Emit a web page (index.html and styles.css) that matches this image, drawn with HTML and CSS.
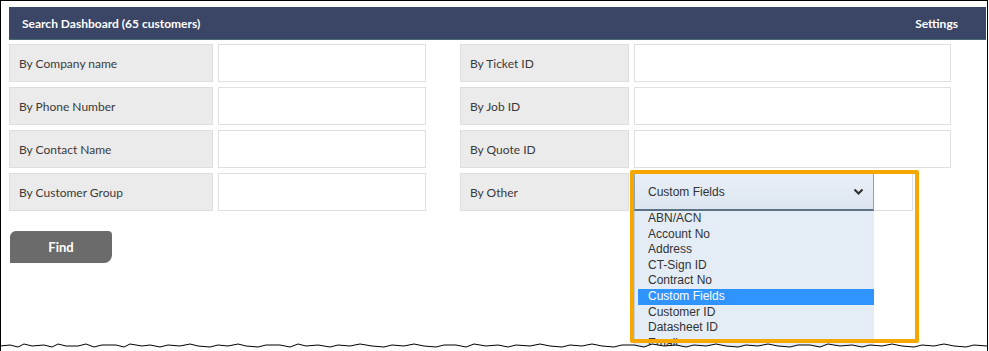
FILE: index.html
```html
<!DOCTYPE html>
<html lang="en">
<head>
    <meta charset="UTF-8">
    <meta name="viewport" content="width=device-width, initial-scale=1.0">
    <title>Search Dashboard</title>
    <link rel="stylesheet" href="styles.css">
</head>
<body>
    <div class="frame">
        <div class="panel">
            <div class="panel-head">
                <span>Search Dashboard (65 customers)</span>
                <span>Settings</span>
            </div>

            <div class="search-grid">
                <div class="lbl">By Company name</div>
                <div class="fld"></div>
                <div></div>
                <div class="lbl">By Ticket ID</div>
                <div class="fld"></div>

                <div class="lbl">By Phone Number</div>
                <div class="fld"></div>
                <div></div>
                <div class="lbl">By Job ID</div>
                <div class="fld"></div>

                <div class="lbl">By Contact Name</div>
                <div class="fld"></div>
                <div></div>
                <div class="lbl">By Quote ID</div>
                <div class="fld"></div>

                <div class="lbl">By Customer Group</div>
                <div class="fld"></div>
                <div></div>
                <div class="lbl">By Other</div>
                <div class="fld fld-other">
                    <div class="select-wrap">
                        <div class="select">
                            <span>Custom Fields</span>
                            <svg class="chevron" width="11" height="8" viewBox="0 0 11 8">
                                <path d="M1.5 1.5 L5.5 5.5 L9.5 1.5" fill="none" stroke="#333" stroke-width="2.2"/>
                            </svg>
                        </div>
                        <ul class="options">
                            <li>ABN/ACN</li>
                            <li>Account No</li>
                            <li>Address</li>
                            <li>CT-Sign ID</li>
                            <li>Contract No</li>
                            <li class="selected">Custom Fields</li>
                            <li>Customer ID</li>
                            <li>Datasheet ID</li>
                            <li>Email</li>
                            <li>Mobile</li>
                        </ul>
                    </div>
                    <div class="callout"></div>
                </div>
            </div>

            <button class="find-btn">Find</button>
        </div>

        <svg class="torn" width="989" height="10" viewBox="0 0 989 10">
            <polygon fill="#fff" points="0,5 10,4 18,6 24,3 32,5 44,4 52,6 58,3 66,5 78,5 86,3 94,6 102,4 116,4 124,6 130,3 142,5 150,4 160,6 168,4 180,5 190,3 198,5 210,6 218,4 228,5 238,3 246,5 258,6 266,4 280,4 290,6 298,3 306,5 318,4 330,6 338,4 350,5 360,3 372,5 384,6 392,4 404,5 414,3 424,5 436,6 444,4 456,4 466,6 474,3 486,5 498,4 508,6 516,4 530,5 540,3 550,5 562,6 570,4 582,5 592,3 602,5 614,6 622,4 634,4 644,6 652,3 664,5 676,4 686,6 694,4 706,5 716,3 726,5 738,6 746,4 758,5 768,3 778,5 790,6 798,4 810,4 820,6 828,3 840,5 852,4 862,6 870,4 882,5 892,3 902,5 914,6 922,4 934,5 944,3 954,5 966,6 974,4 987,5 989,5 989,10 0,10"/>
            <polyline fill="none" stroke="#000" stroke-width="1" points="0,5 10,4 18,6 24,3 32,5 44,4 52,6 58,3 66,5 78,5 86,3 94,6 102,4 116,4 124,6 130,3 142,5 150,4 160,6 168,4 180,5 190,3 198,5 210,6 218,4 228,5 238,3 246,5 258,6 266,4 280,4 290,6 298,3 306,5 318,4 330,6 338,4 350,5 360,3 372,5 384,6 392,4 404,5 414,3 424,5 436,6 444,4 456,4 466,6 474,3 486,5 498,4 508,6 516,4 530,5 540,3 550,5 562,6 570,4 582,5 592,3 602,5 614,6 622,4 634,4 644,6 652,3 664,5 676,4 686,6 694,4 706,5 716,3 726,5 738,6 746,4 758,5 768,3 778,5 790,6 798,4 810,4 820,6 828,3 840,5 852,4 862,6 870,4 882,5 892,3 902,5 914,6 922,4 934,5 944,3 954,5 966,6 974,4 987,5"/>
        </svg>
    </div>
</body>
</html>
```

FILE: styles.css
```css
body {
    margin: 0;
    background-color: #ffffff;
    font-family: Lato, "Open Sans", sans-serif;
}
.frame {
    position: relative;
    width: 988px;
    height: 351px;
    box-sizing: border-box;
    border: 1px solid #000;
    border-bottom: none;
    overflow: hidden;
    background-color: #ffffff;
}
.panel {
    width: 977px;
    margin: 6px 0 0 8px;
}
.panel-head {
    display: flex;
    justify-content: space-between;
    align-items: center;
    height: 32px;
    padding: 0 28px 0 13px;
    background-color: #3b4566;
    border-bottom: 1px solid #4d6a78;
    color: #ffffff;
    font-size: 12px;
    font-weight: bold;
}
.search-grid {
    display: grid;
    grid-template-columns: 204px 208px 24px 169px 317px;
    grid-auto-rows: 38px;
    gap: 5px;
    margin-top: 4px;
}
.lbl {
    display: flex;
    align-items: center;
    padding-left: 9px;
    background-color: #ebebeb;
    border: 1px solid #dedede;
    color: #3a3a3a;
    font-size: 12px;
}
.fld {
    background-color: #ffffff;
    border: 1px solid #e0e0e0;
}
.fld-other {
    position: relative;
    width: 279px;
    box-sizing: border-box;
}
.select-wrap {
    position: relative;
    width: 240px;
    height: 38px;
    margin: -1px 0 0 -1px;
    z-index: 2;
}
.select {
    display: flex;
    justify-content: space-between;
    align-items: center;
    height: 100%;
    box-sizing: border-box;
    padding: 0 9px 0 13px;
    background: linear-gradient(#e9eff7, #dde6f0);
    border: 1px solid #8aa3b8;
    border-bottom: 2px solid #5c7387;
    color: #333;
    font-family: "Liberation Sans", Arial, sans-serif;
    font-size: 12px;
}
.chevron {
    margin-top: 1px;
}
.options {
    position: absolute;
    top: 100%;
    left: 0;
    width: 240px;
    box-sizing: border-box;
    margin: 0;
    padding: 0 0 0 3px;
    list-style: none;
    background-color: #e4ecf6;
    border-left: 1px solid #c3d0dd;
    color: #333;
    font-family: "Liberation Sans", Arial, sans-serif;
    font-size: 12px;
}
.options li {
    height: 15.6px;
    line-height: 15.6px;
    padding-left: 10px;
}
.options li.selected {
    background-color: #3094fe;
    color: #ffffff;
}
.callout {
    position: absolute;
    left: -5px;
    top: -4px;
    width: 289px;
    height: 173px;
    box-sizing: border-box;
    border: 4px solid #f6a800;
    border-radius: 2px;
    z-index: 3;
}
.find-btn {
    display: block;
    width: 102px;
    height: 32px;
    margin: 20px 0 0 1px;
    padding: 0;
    background-color: #6b6b6b;
    border: none;
    border-radius: 6px 4px 8px 0;
    color: #ffffff;
    font-family: Lato, sans-serif;
    font-size: 13px;
    font-weight: bold;
    cursor: pointer;
}
.torn {
    position: absolute;
    left: -1px;
    bottom: 0;
    z-index: 5;
}
```
